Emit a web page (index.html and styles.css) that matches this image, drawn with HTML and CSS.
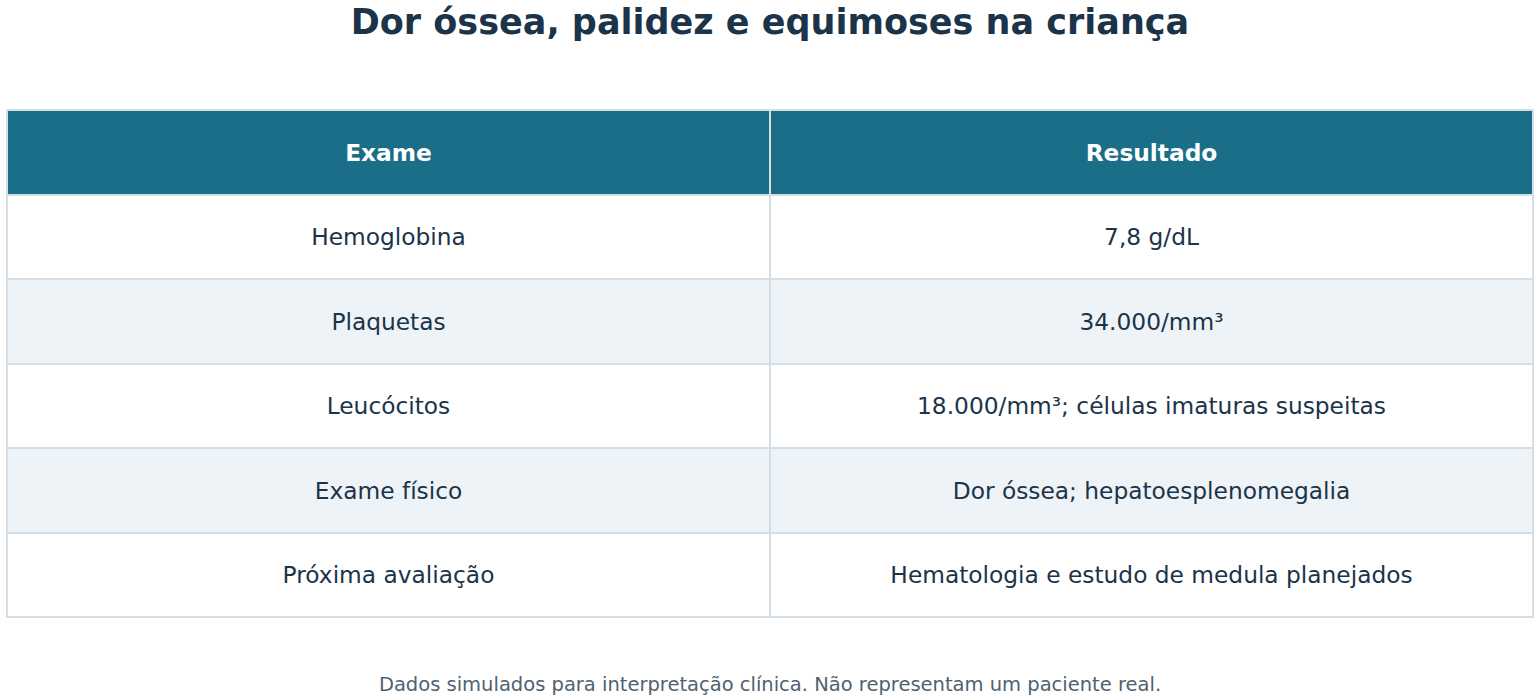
FILE: index.html
```html
<!DOCTYPE html>
<html lang="pt">
<head>
<meta charset="utf-8">
<link rel="stylesheet" href="styles.css">
</head>
<body>
<h1 class="title">Dor óssea, palidez e equimoses na criança</h1>
<table class="data">
<thead>
<tr><th>Exame</th><th>Resultado</th></tr>
</thead>
<tbody>
<tr><td>Hemoglobina</td><td>7,8 g/dL</td></tr>
<tr><td>Plaquetas</td><td>34.000/mm³</td></tr>
<tr><td>Leucócitos</td><td>18.000/mm³; células imaturas suspeitas</td></tr>
<tr><td>Exame físico</td><td>Dor óssea; hepatoesplenomegalia</td></tr>
<tr><td>Próxima avaliação</td><td>Hematologia e estudo de medula planejados</td></tr>
</tbody>
</table>
<p class="note">Dados simulados para interpretação clínica. Não representam um paciente real.</p>
</body>
</html>
```
FILE: styles.css
```css
html, body {
  margin: 0;
  padding: 0;
  background: #ffffff;
}
body {
  padding: 0 6px;
  font-family: "DejaVu Sans", sans-serif;
  color: #1b3449;
}
.title {
  margin: 5px 0 0 0;
  font-size: 35px;
  line-height: 35px;
  font-weight: bold;
  text-align: center;
  color: #1b3449;
}
.data {
  width: 100%;
  margin-top: 69px;
  border-collapse: collapse;
  table-layout: fixed;
  border: 2px solid #d3dee6;
}
.data th, .data td {
  border: 2px solid #d3dee6;
  text-align: center;
  height: 82.5px;
  padding: 0;
  font-size: 23.3px;
}
.data th {
  background: #1a6e87;
  color: #ffffff;
  font-weight: bold;
}
.data td {
  color: #1b3449;
}
.data tbody tr:nth-child(even) td {
  background: #eef3f7;
}
.note {
  margin: 55px 0 0 0;
  text-align: center;
  font-size: 19.5px;
  color: #4f6272;
}
```
